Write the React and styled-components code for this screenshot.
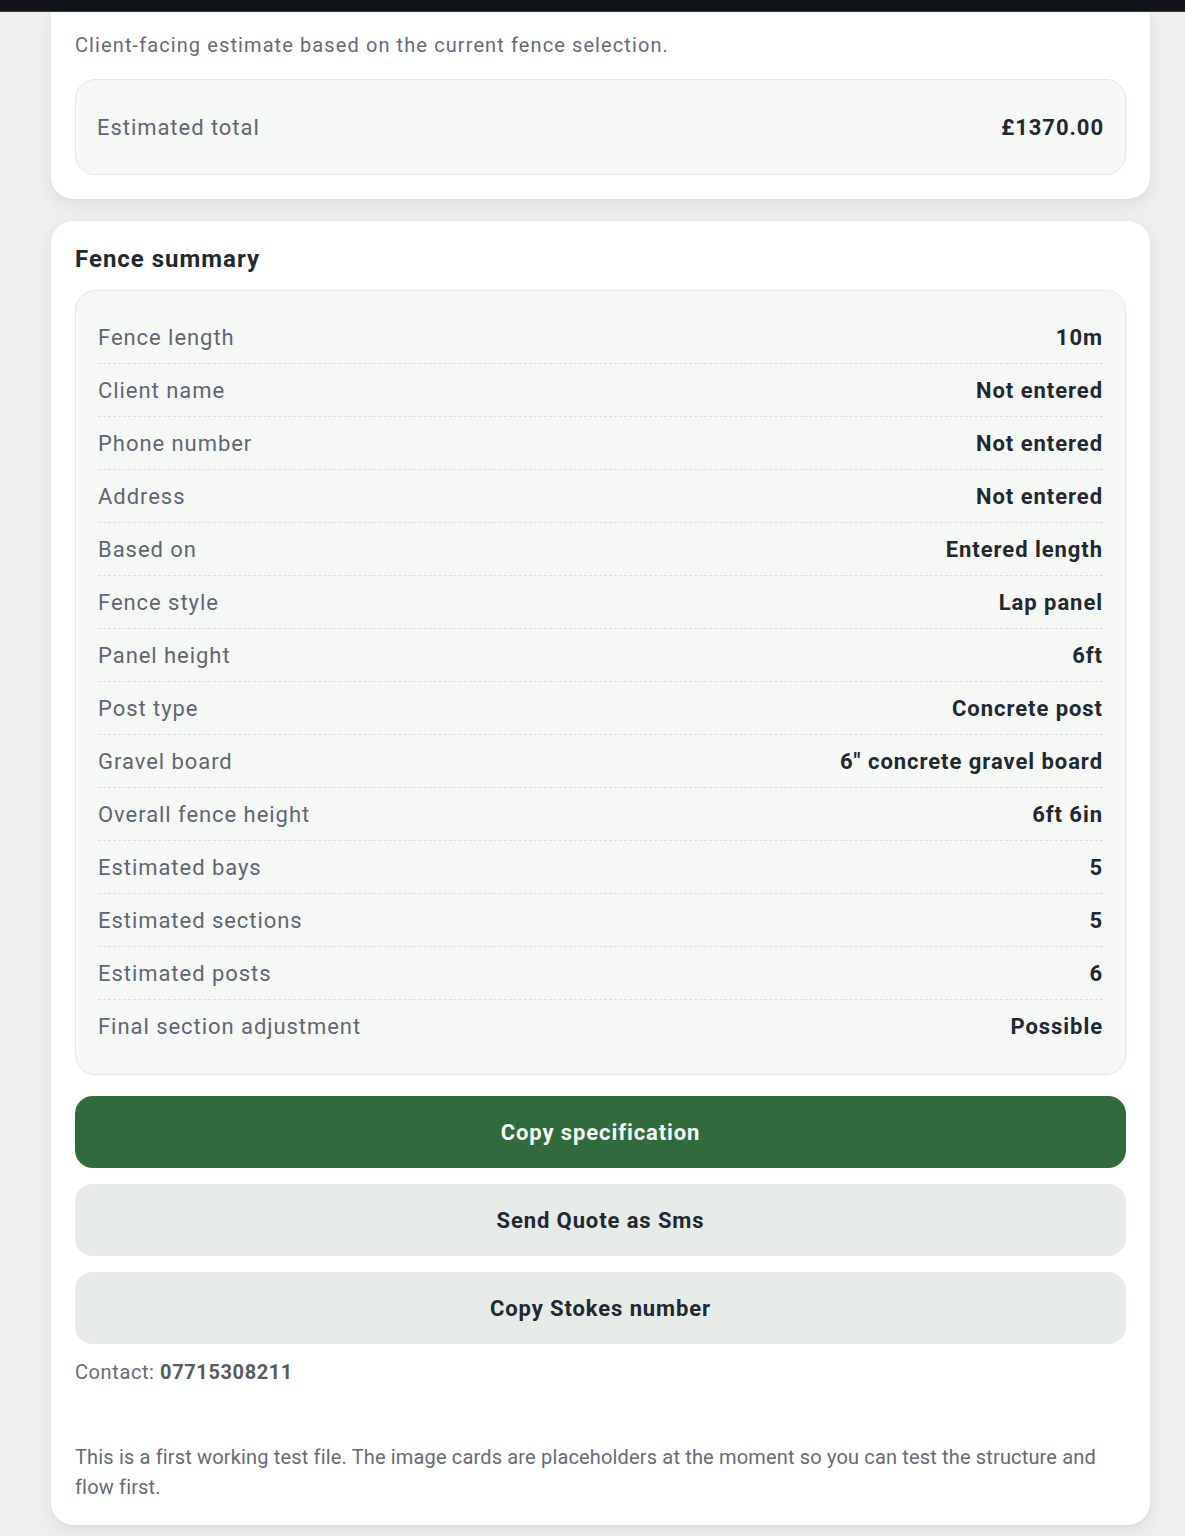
import React from "react";
import styled, { createGlobalStyle } from "styled-components";

const Global = createGlobalStyle`
  html, body { margin: 0; padding: 0; background: #eef0ee; }
  body { font-family: Roboto, "Liberation Sans", Arial, sans-serif; color: #222831; }
  * { box-sizing: border-box; }
`;

const TopBar = styled.div`
  height: 12px;
  background: #12141b;
  border-bottom: 1px solid #3a3d45;
`;

const Page = styled.div`
  padding: 0 35px 11px 51px;
  display: flex;
  flex-direction: column;
  gap: 22px;
`;

const Card = styled.section`
  background: #ffffff;
  border-radius: ${(p) => (p.$flatTop ? "0 0 22px 22px" : "22px")};
  box-shadow: 0 6px 18px rgba(30, 40, 30, 0.08), 0 1px 3px rgba(30, 40, 30, 0.05);
  padding: ${(p) => (p.$flatTop ? "19px 24px 24px" : "24px 24px 23px")};
`;

const Subtitle = styled.p`
  margin: 0 0 20px;
  font-size: 20px;
  line-height: 28px;
  letter-spacing: 1.1px;
  color: #646b76;
`;

const Panel = styled.div`
  background: #f6f8f6;
  border: 1px solid #e4e8e4;
  border-radius: 20px;
  padding: ${(p) => p.$pad || "20px 22px 22px"};
`;

const TotalRow = styled.div`
  display: flex;
  justify-content: space-between;
  align-items: center;
  height: 94px;
  padding: 0 21px;
`;

const Title = styled.h2`
  margin: 0 0 17px;
  font-size: 24px;
  line-height: 28px;
  font-weight: 700;
  letter-spacing: 1px;
  color: #222831;
`;

const Row = styled.div`
  display: flex;
  justify-content: space-between;
  align-items: center;
  height: 53px;
  border-bottom: 1px dashed #dadfda;
  &:last-child { border-bottom: none; height: 52px; }
`;

const Label = styled.span`
  font-size: 22px;
  letter-spacing: 0.95px;
  color: #5f6672;
`;

const Value = styled.span`
  font-size: 22px;
  font-weight: 700;
  letter-spacing: 0.95px;
  color: #222831;
`;

const Buttons = styled.div`
  display: flex;
  flex-direction: column;
  gap: 16px;
  margin-top: 21px;
`;

const Button = styled.button`
  height: 72px;
  border: none;
  border-radius: 18px;
  font-family: inherit;
  font-size: 22px;
  font-weight: 700;
  letter-spacing: 0.9px;
  background: ${(p) => (p.$primary ? "#316b3d" : "#e6ebe8")};
  color: ${(p) => (p.$primary ? "#f6faf6" : "#222831")};
`;

const Contact = styled.p`
  margin: 14px 0 0;
  font-size: 20px;
  line-height: 28px;
  letter-spacing: 0.6px;
  color: #646b76;
  strong { font-weight: 700; color: #545b66; }
`;

const Note = styled.p`
  margin: 56px 0 0;
  font-size: 20px;
  line-height: 30px;
  letter-spacing: 0.16px;
  color: #646b76;
`;

const rows = [
  ["Fence length", "10m"],
  ["Client name", "Not entered"],
  ["Phone number", "Not entered"],
  ["Address", "Not entered"],
  ["Based on", "Entered length"],
  ["Fence style", "Lap panel"],
  ["Panel height", "6ft"],
  ["Post type", "Concrete post"],
  ["Gravel board", "6\" concrete gravel board"],
  ["Overall fence height", "6ft 6in"],
  ["Estimated bays", "5"],
  ["Estimated sections", "5"],
  ["Estimated posts", "6"],
  ["Final section adjustment", "Possible"],
];

export default function App() {
  return (
    <>
      <Global />
      <TopBar />
      <Page>
        <Card $flatTop>
          <Subtitle>Client-facing estimate based on the current fence selection.</Subtitle>
          <Panel $pad="0">
            <TotalRow>
              <Label>Estimated total</Label>
              <Value>£1370.00</Value>
            </TotalRow>
          </Panel>
        </Card>
        <Card>
          <Title>Fence summary</Title>
          <Panel>
            {rows.map(([l, v]) => (
              <Row key={l}>
                <Label>{l}</Label>
                <Value>{v}</Value>
              </Row>
            ))}
          </Panel>
          <Buttons>
            <Button $primary>Copy specification</Button>
            <Button>Send Quote as Sms</Button>
            <Button>Copy Stokes number</Button>
          </Buttons>
          <Contact>
            Contact: <strong>07715308211</strong>
          </Contact>
          <Note>
            This is a first working test file. The image cards are placeholders at the moment so you can test the structure and flow first.
          </Note>
        </Card>
      </Page>
    </>
  );
}
